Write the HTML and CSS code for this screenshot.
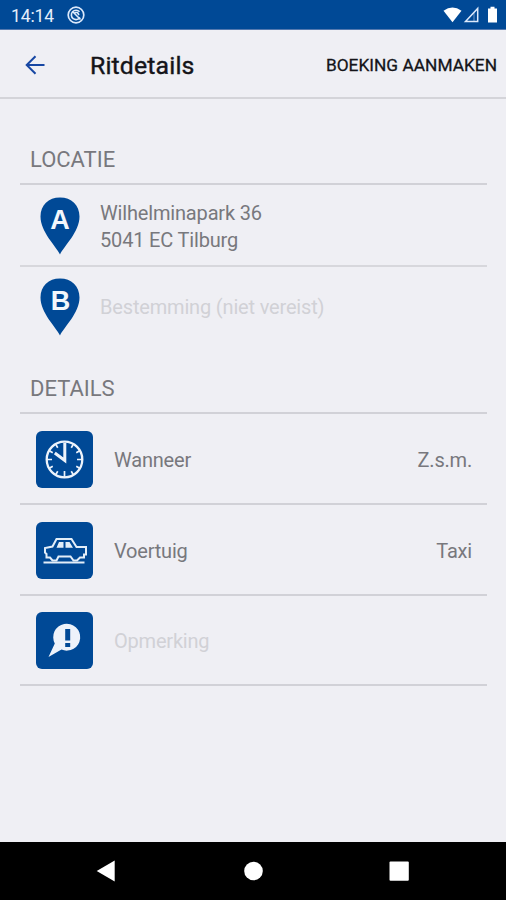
FILE: index.html
```html
<!DOCTYPE html>
<html lang="nl">
<head>
<meta charset="utf-8">
<title>Ritdetails</title>
<link rel="stylesheet" href="styles.css">
</head>
<body>
<div class="status">
  <span class="time">14:14</span>
  <svg class="app-icon" width="18" height="18" viewBox="0 0 18 18" fill="none" stroke="#dce9fb"><circle cx="9" cy="9" r="7.8" stroke-width="1.7"/><path d="M13 11.500A4.700 4.700 0 1 1 12.500 5.700" stroke-width="1.6"/><path d="M5.500 5.500 13.500 13.500M7.500 6.500h3l1.500 2.500" stroke-width="1.6"/></svg>
  <svg class="signals" width="56" height="18" viewBox="0 0 56 18"><path d="M.5 4.800Q9.500-1.800 18.500 4.800L9.500 16.200Z" fill="#fff"/><path d="M22.500 15.500 34.700 2.500V15.500Z" fill="none" stroke="#dce9fb" stroke-width="1.500"/><path d="M31 7V15" stroke="#dce9fb" stroke-opacity=".5"/><path d="M45 2.500h2.500V.800h4v1.700H54V16.500H45Z" fill="#fff"/></svg>
</div>
<header class="bar">
  <svg class="back" width="20" height="20" viewBox="0 0 20 20" fill="none" stroke="#1747a3" stroke-width="2"><path d="M19.500 10H2M10.500 1.200 1.700 10l8.800 8.800"/></svg>
  <h1 class="title">Ritdetails</h1>
  <span class="action">BOEKING AANMAKEN</span>
</header>
<main class="content">
  <h2 class="heading heading-location">LOCATIE</h2>
  <section class="locations">
    <div class="stop stop-from">
      <svg class="pin" width="40" height="58" viewBox="0 0 40 58"><path d="M20 57.500C16 49 .5 35 .5 19.500.5 8 8.500.5 20 .5S39.500 8 39.500 19.500C39.500 35 24 49 20 57.500Z" fill="#004996"/><text class="pin-letter" x="20" y="32">A</text></svg>
      <div class="address">Wilhelminapark 36<br>5041 EC Tilburg</div>
    </div>
    <div class="stop stop-to">
      <svg class="pin" width="40" height="58" viewBox="0 0 40 58"><path d="M20 57.500C16 49 .5 35 .5 19.500.5 8 8.500.5 20 .5S39.500 8 39.500 19.500C39.500 35 24 49 20 57.500Z" fill="#004996"/><text class="pin-letter" x="20.500" y="32">B</text></svg>
      <div class="address hint destination">Bestemming (niet vereist)</div>
    </div>
  </section>
  <h2 class="heading heading-details">DETAILS</h2>
  <section class="details">
    <div class="row row-when">
      <svg class="tile" viewBox="0 0 57 57"><g fill="none" stroke="#edf3fb"><circle cx="28.500" cy="28.500" r="17.800" stroke-width="2.300"/><path d="M28.500 40v6M11 28.500h5M41 28.500h5M19.750 13.350l2 3.400M13.350 19.750l3.400 2M13.350 37.250l3.400-2M19.750 43.650l2-3.400M37.250 43.650l-2-3.400M43.650 37.250l-3.400-2M43.650 19.750l-3.400 2M37.250 13.350l-2 3.400" stroke-width="1.700"/><path d="M28.800 12V29.500L18.800 22" stroke-width="3"/></g></svg>
      <span class="label">Wanneer</span><span class="value">Z.s.m.</span>
    </div>
    <div class="row row-vehicle">
      <svg class="tile" viewBox="0 0 57 57"><g fill="none" stroke="#e2edf8" stroke-width="2"><path d="M14 35.500H10.500V32L9 30.500V26L16.500 24.500 20.500 17H35.500L40.500 25H50V32.500H48V35.500H44L41 38.500H37.500L34.500 34.500H22.500L20.500 38.500H16.500Z"/><path d="M7.500 40.500H48.500" stroke-width="2"/><path d="M20.500 25.800 23 20H27.500V25.800ZM29.500 20h4l3.500 5.800H29.500Z" fill="#e2edf8" stroke="none"/></g></svg>
      <span class="label">Voertuig</span><span class="value">Taxi</span>
    </div>
    <div class="row row-note">
      <svg class="tile" viewBox="0 0 57 57"><path d="M12.500 45 18.800 31.500A13.500 13.500 0 1 1 25.500 37.600Z" fill="#edf2fa"/><path d="M29.200 17H34.200V28.500H29.200ZM29.200 31H34.200V35H29.200Z" fill="#004996"/></svg>
      <span class="label hint">Opmerking</span>
    </div>
  </section>
</main>
<nav class="nav">
  <svg width="506" height="58" viewBox="0 0 506 58" fill="#fff"><path d="M96.700 29 114.700 18.600V39.500Z"/><circle cx="253.500" cy="29" r="9.300"/><rect x="389.500" y="19.500" width="19.300" height="19.200" rx="1"/></svg>
</nav>
</body>
</html>
```
FILE: styles.css
```css
* { box-sizing: border-box; }
body { margin: 0; width: 506px; height: 900px; display: flex; flex-direction: column; background: #efeff4; font-family: Roboto, "Liberation Sans", sans-serif; color: #78787d; overflow: hidden; }
h1, h2 { margin: 0; font-weight: 400; }
svg { display: block; flex: none; }
.status { height: 30px; background: #004996; border-bottom: 1px solid #5479af; display: flex; align-items: center; padding: 1px 7px 0 11px; }
.time { width: 56px; font-size: 17.500px; letter-spacing: -0.1px; padding-top: 1px; color: #e4eefb; }
.signals { margin-left: auto; }
.bar { height: 69px; flex: none; border-bottom: 2px solid #d4d4d9; display: flex; align-items: center; padding: 2px 9px 0 25px; color: #141419; }
.title { margin-left: 45px; font-size: 24.800px; -webkit-text-stroke: 0.4px #141419; letter-spacing: 0.15px; padding-top: 2px; }
.action { margin-left: auto; font-size: 17.300px; -webkit-text-stroke: 0.3px #141419; white-space: nowrap; padding-top: 1px; letter-spacing: 0.02px; }
.content { flex: 1; padding: 0 19px 0 20px; }
.heading { font-size: 22px; line-height: 28px; padding-left: 10px; }
.heading-location { height: 84px; padding-top: 47px; }
.heading-details { height: 66px; padding-top: 29px; }
.locations { border-top: 2px solid #d1d1d7; }
.stop { display: flex; padding-left: 20px; }
.stop-from { height: 82px; padding-top: 12px; border-bottom: 2px solid #d7d7dc; }
.stop-to { height: 79px; padding-top: 11px; }
.address { margin-left: 20px; padding-top: 3px; font-size: 20px; line-height: 27px; letter-spacing: -0.17px; }
.destination { padding-top: 16px; }
.pin-letter { font: 700 27px "Liberation Sans", sans-serif; fill: #f3f7fc; text-anchor: middle; }
.row { display: flex; align-items: center; border-bottom: 2px solid #d1d1d7; padding: 0 15px 0 16px; font-size: 20px; letter-spacing: -0.2px; }
.details { border-top: 2px solid #d1d1d7; }
.row-when { height: 91px; padding-top: 1px; }
.row-vehicle { height: 91px; padding-top: 1px; }
.row-note { height: 90px; }
.tile { width: 57px; height: 57px; background: #004996; border-radius: 6px; }
.label { margin-left: 21px; padding-top: 1px; }
.value { margin-left: auto; padding-top: 1px; }
.hint { color: #d1d1d6; }
.nav { height: 58px; flex: none; background: #000; }
```
